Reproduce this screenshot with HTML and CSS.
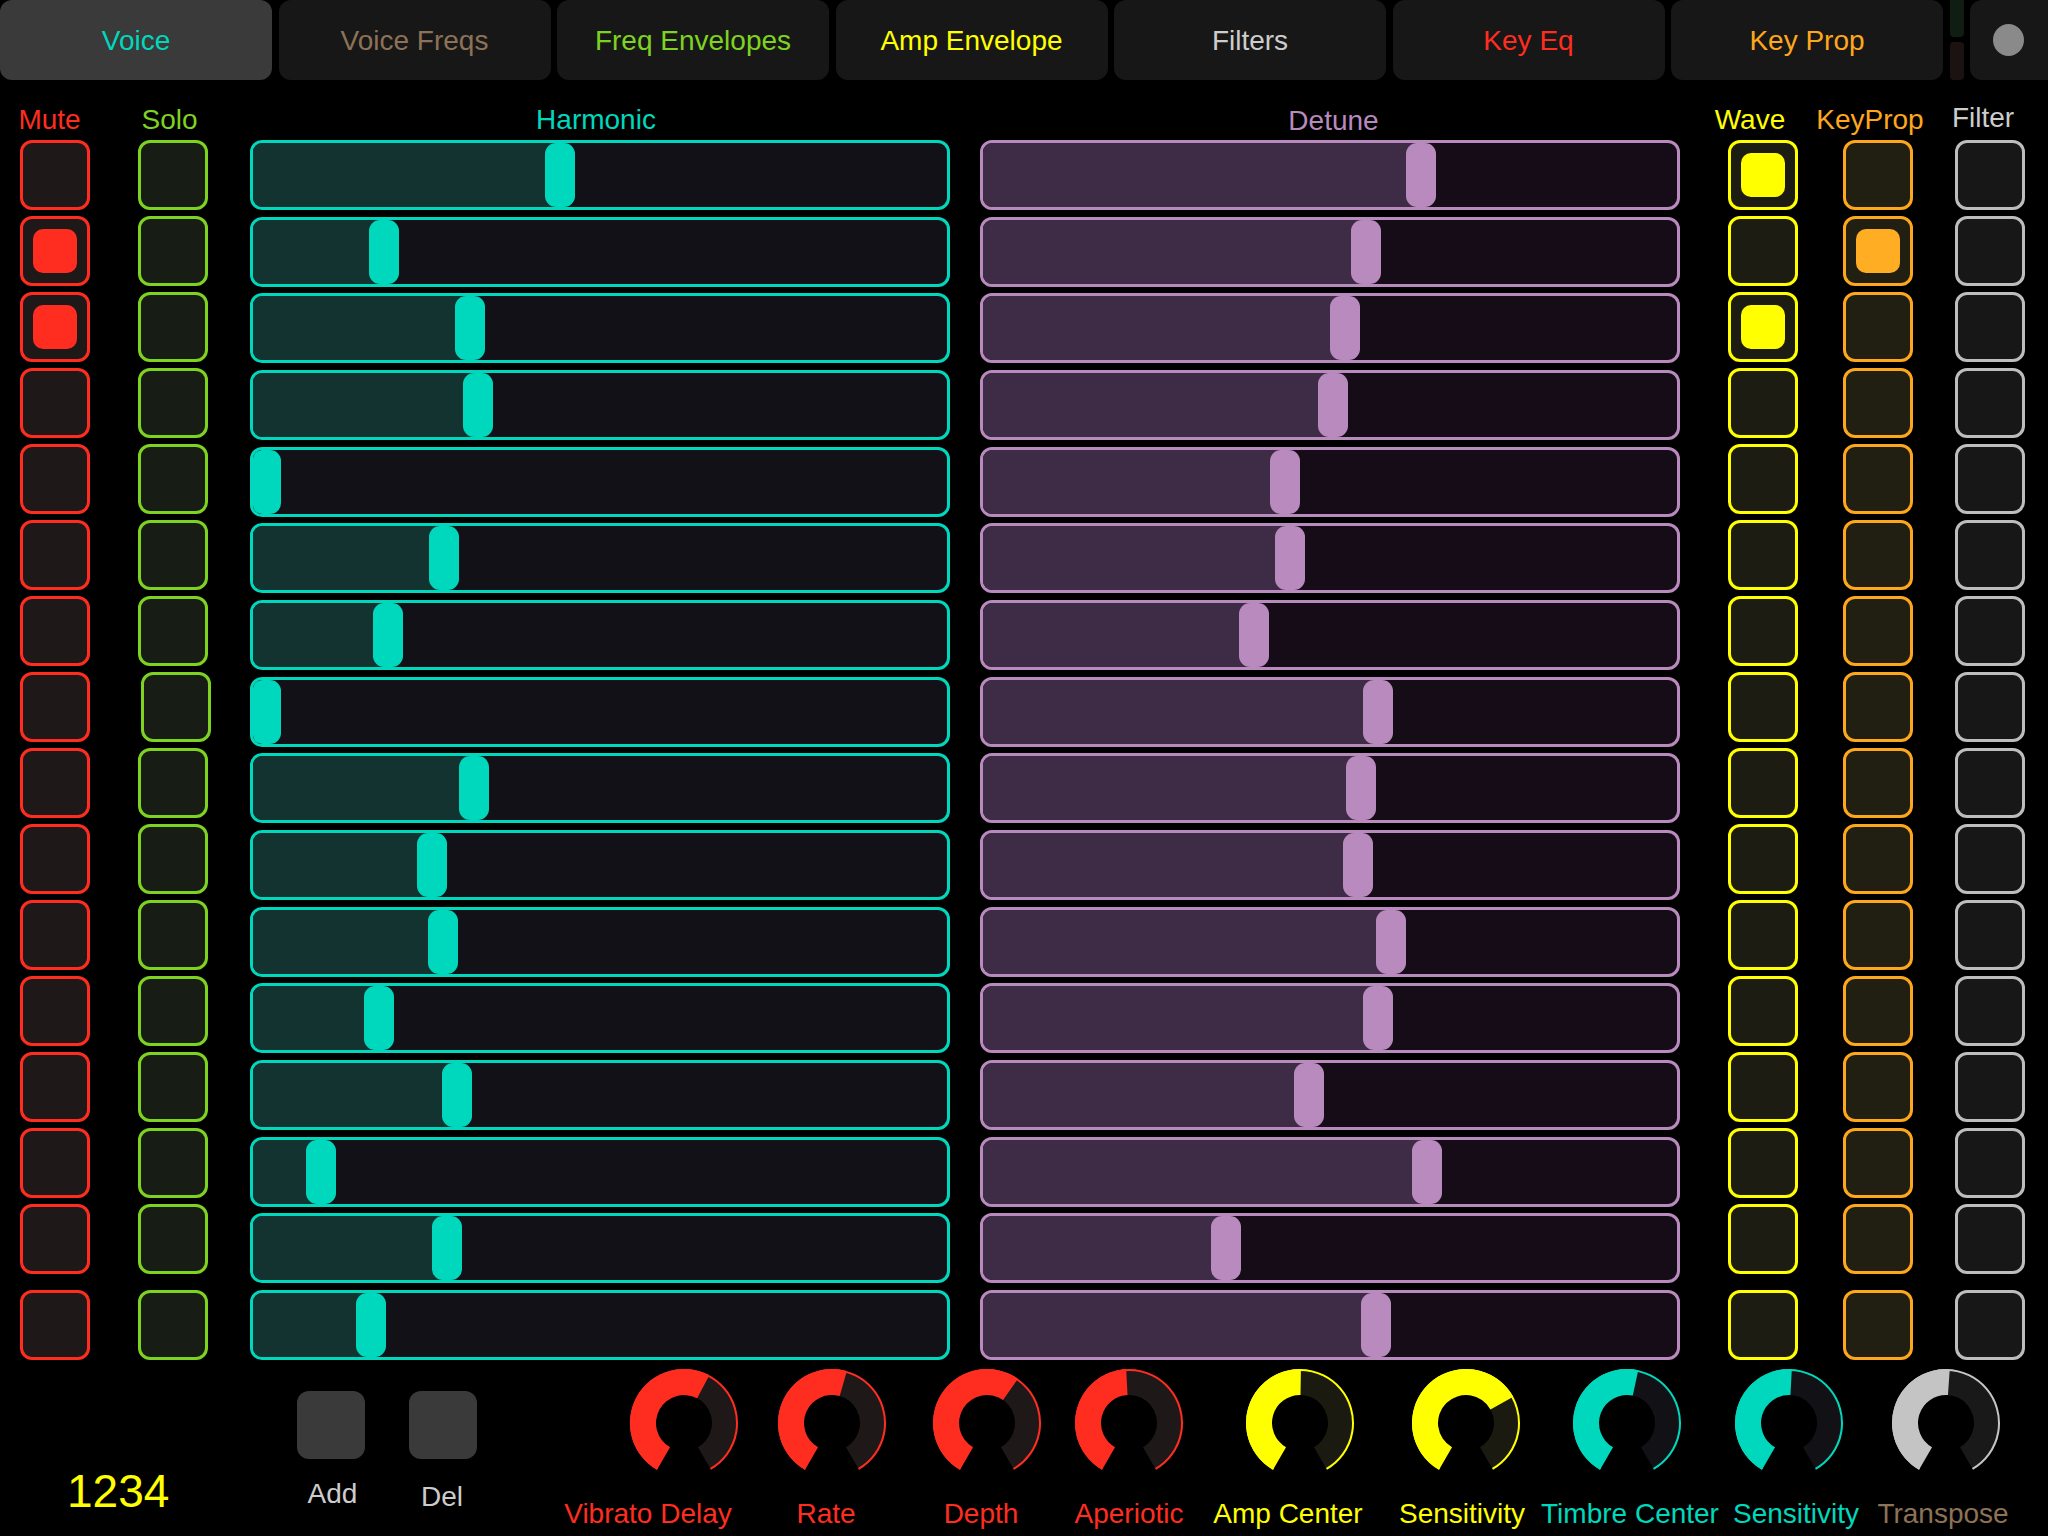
FILE: index.html
```html
<!DOCTYPE html>
<html>
<head>
<meta charset="utf-8">
<link rel="stylesheet" href="styles.css">
</head>
<body>
<div class="tabs">
  <div class="tab tab-active c-teal">Voice</div>
  <div class="tab c-brown">Voice Freqs</div>
  <div class="tab c-green">Freq Envelopes</div>
  <div class="tab c-yellow">Amp Envelope</div>
  <div class="tab c-light">Filters</div>
  <div class="tab c-red">Key Eq</div>
  <div class="tab c-orange">Key Prop</div>
  <div class="meter"><div class="meter-top"></div><div class="meter-bot"></div></div>
  <div class="roundbtn"><div class="dot"></div></div>
</div>

<div class="board">
  <div class="col col-mute">
    <div class="head"><span class="lbl c-red sh-mute">Mute</span></div>
    <div class="stack">
      <div class="tog tog-red"></div><div class="tog tog-red on"></div><div class="tog tog-red on"></div><div class="tog tog-red"></div>
      <div class="tog tog-red"></div><div class="tog tog-red"></div><div class="tog tog-red"></div><div class="tog tog-red"></div>
      <div class="tog tog-red"></div><div class="tog tog-red"></div><div class="tog tog-red"></div><div class="tog tog-red"></div>
      <div class="tog tog-red"></div><div class="tog tog-red"></div><div class="tog tog-red"></div><div class="tog tog-red"></div>
    </div>
  </div>
  <div class="col col-solo">
    <div class="head"><span class="lbl c-green sh-solo">Solo</span></div>
    <div class="stack">
      <div class="tog tog-green"></div><div class="tog tog-green"></div><div class="tog tog-green"></div><div class="tog tog-green"></div>
      <div class="tog tog-green"></div><div class="tog tog-green"></div><div class="tog tog-green"></div><div class="tog tog-green tog-nudge"></div>
      <div class="tog tog-green"></div><div class="tog tog-green"></div><div class="tog tog-green"></div><div class="tog tog-green"></div>
      <div class="tog tog-green"></div><div class="tog tog-green"></div><div class="tog tog-green"></div><div class="tog tog-green"></div>
    </div>
  </div>
  <div class="col col-harm">
    <div class="head"><span class="lbl c-teal sh-harm">Harmonic</span></div>
    <div class="sliders">
      <div class="slider sl-teal"><div class="fill" style="width:307px"></div></div>
      <div class="slider sl-teal"><div class="fill" style="width:131px"></div></div>
      <div class="slider sl-teal"><div class="fill" style="width:217px"></div></div>
      <div class="slider sl-teal"><div class="fill" style="width:225px"></div></div>
      <div class="slider sl-teal"><div class="fill" style="width:13px"></div></div>
      <div class="slider sl-teal"><div class="fill" style="width:191px"></div></div>
      <div class="slider sl-teal"><div class="fill" style="width:135px"></div></div>
      <div class="slider sl-teal"><div class="fill" style="width:13px"></div></div>
      <div class="slider sl-teal"><div class="fill" style="width:221px"></div></div>
      <div class="slider sl-teal"><div class="fill" style="width:179px"></div></div>
      <div class="slider sl-teal"><div class="fill" style="width:190px"></div></div>
      <div class="slider sl-teal"><div class="fill" style="width:126px"></div></div>
      <div class="slider sl-teal"><div class="fill" style="width:204px"></div></div>
      <div class="slider sl-teal"><div class="fill" style="width:68px"></div></div>
      <div class="slider sl-teal"><div class="fill" style="width:194px"></div></div>
      <div class="slider sl-teal"><div class="fill" style="width:118px"></div></div>
    </div>
  </div>
  <div class="col col-det">
    <div class="head"><span class="lbl c-purple sh-det">Detune</span></div>
    <div class="sliders">
      <div class="slider sl-purple"><div class="fill" style="width:438px"></div></div>
      <div class="slider sl-purple"><div class="fill" style="width:383px"></div></div>
      <div class="slider sl-purple"><div class="fill" style="width:362px"></div></div>
      <div class="slider sl-purple"><div class="fill" style="width:350px"></div></div>
      <div class="slider sl-purple"><div class="fill" style="width:302px"></div></div>
      <div class="slider sl-purple"><div class="fill" style="width:307px"></div></div>
      <div class="slider sl-purple"><div class="fill" style="width:271px"></div></div>
      <div class="slider sl-purple"><div class="fill" style="width:395px"></div></div>
      <div class="slider sl-purple"><div class="fill" style="width:378px"></div></div>
      <div class="slider sl-purple"><div class="fill" style="width:375px"></div></div>
      <div class="slider sl-purple"><div class="fill" style="width:408px"></div></div>
      <div class="slider sl-purple"><div class="fill" style="width:395px"></div></div>
      <div class="slider sl-purple"><div class="fill" style="width:326px"></div></div>
      <div class="slider sl-purple"><div class="fill" style="width:444px"></div></div>
      <div class="slider sl-purple"><div class="fill" style="width:243px"></div></div>
      <div class="slider sl-purple"><div class="fill" style="width:393px"></div></div>
    </div>
  </div>
  <div class="col col-wave">
    <div class="head"><span class="lbl c-yellow sh-wave">Wave</span></div>
    <div class="stack">
      <div class="tog tog-yellow on"></div><div class="tog tog-yellow"></div><div class="tog tog-yellow on"></div><div class="tog tog-yellow"></div>
      <div class="tog tog-yellow"></div><div class="tog tog-yellow"></div><div class="tog tog-yellow"></div><div class="tog tog-yellow"></div>
      <div class="tog tog-yellow"></div><div class="tog tog-yellow"></div><div class="tog tog-yellow"></div><div class="tog tog-yellow"></div>
      <div class="tog tog-yellow"></div><div class="tog tog-yellow"></div><div class="tog tog-yellow"></div><div class="tog tog-yellow"></div>
    </div>
  </div>
  <div class="col col-kp">
    <div class="head"><span class="lbl c-orange sh-kp">KeyProp</span></div>
    <div class="stack">
      <div class="tog tog-orange"></div><div class="tog tog-orange on"></div><div class="tog tog-orange"></div><div class="tog tog-orange"></div>
      <div class="tog tog-orange"></div><div class="tog tog-orange"></div><div class="tog tog-orange"></div><div class="tog tog-orange"></div>
      <div class="tog tog-orange"></div><div class="tog tog-orange"></div><div class="tog tog-orange"></div><div class="tog tog-orange"></div>
      <div class="tog tog-orange"></div><div class="tog tog-orange"></div><div class="tog tog-orange"></div><div class="tog tog-orange"></div>
    </div>
  </div>
  <div class="col col-filt">
    <div class="head"><span class="lbl c-light sh-filt">Filter</span></div>
    <div class="stack">
      <div class="tog tog-grey"></div><div class="tog tog-grey"></div><div class="tog tog-grey"></div><div class="tog tog-grey"></div>
      <div class="tog tog-grey"></div><div class="tog tog-grey"></div><div class="tog tog-grey"></div><div class="tog tog-grey"></div>
      <div class="tog tog-grey"></div><div class="tog tog-grey"></div><div class="tog tog-grey"></div><div class="tog tog-grey"></div>
      <div class="tog tog-grey"></div><div class="tog tog-grey"></div><div class="tog tog-grey"></div><div class="tog tog-grey"></div>
    </div>
  </div>
</div>

<div class="bottom">
  <div class="count">1234</div>
  <div class="pad"><div class="pad-btn"></div><div class="pad-lbl">Add</div></div>
  <div class="pad pad-del"><div class="pad-btn"></div><div class="pad-lbl">Del</div></div>

  <div class="knob k-red kn-1">
    <svg viewBox="0 0 110 110" width="110" height="110">
      <path class="k-track" d="M28,101.77A54,54 0 1 1 82,101.77L69,79.25A28,28 0 1 0 41,79.25Z"/>
      <path class="k-edge" d="M28.5,100.9A53,53 0 1 1 81.5,100.9"/>
      <path class="k-val" d="M28,101.77A54,54 0 0 1 80.35,7.32L68.15,30.28A28,28 0 0 0 41,79.25Z"/>
    </svg>
    <div class="k-lbl kl-1">Vibrato Delay</div>
  </div>
  <div class="knob k-red kn-2">
    <svg viewBox="0 0 110 110" width="110" height="110">
      <path class="k-track" d="M28,101.77A54,54 0 1 1 82,101.77L69,79.25A28,28 0 1 0 41,79.25Z"/>
      <path class="k-edge" d="M28.5,100.9A53,53 0 1 1 81.5,100.9"/>
      <path class="k-val" d="M28,101.77A54,54 0 0 1 69.88,3.09L62.72,28.08A28,28 0 0 0 41,79.25Z"/>
    </svg>
    <div class="k-lbl kl-2">Rate</div>
  </div>
  <div class="knob k-red kn-3">
    <svg viewBox="0 0 110 110" width="110" height="110">
      <path class="k-track" d="M28,101.77A54,54 0 1 1 82,101.77L69,79.25A28,28 0 1 0 41,79.25Z"/>
      <path class="k-edge" d="M28.5,100.9A53,53 0 1 1 81.5,100.9"/>
      <path class="k-val" d="M28,101.77A54,54 0 1 1 85.97,10.76L71.06,32.06A28,28 0 1 0 41,79.25Z"/>
    </svg>
    <div class="k-lbl kl-3">Depth</div>
  </div>
  <div class="knob k-red kn-4">
    <svg viewBox="0 0 110 110" width="110" height="110">
      <path class="k-track" d="M28,101.77A54,54 0 1 1 82,101.77L69,79.25A28,28 0 1 0 41,79.25Z"/>
      <path class="k-edge" d="M28.5,100.9A53,53 0 1 1 81.5,100.9"/>
      <path class="k-val" d="M28,101.77A54,54 0 0 1 52.17,1.08L53.54,27.04A28,28 0 0 0 41,79.25Z"/>
    </svg>
    <div class="k-lbl kl-4">Aperiotic</div>
  </div>
  <div class="knob k-yellow kn-5">
    <svg viewBox="0 0 110 110" width="110" height="110">
      <path class="k-track" d="M28,101.77A54,54 0 1 1 82,101.77L69,79.25A28,28 0 1 0 41,79.25Z"/>
      <path class="k-edge" d="M28.5,100.9A53,53 0 1 1 81.5,100.9"/>
      <path class="k-val" d="M28,101.77A54,54 0 0 1 55.94,1.01L55.49,27A28,28 0 0 0 41,79.25Z"/>
    </svg>
    <div class="k-lbl kl-5">Amp Center</div>
  </div>
  <div class="knob k-yellow kn-6">
    <svg viewBox="0 0 110 110" width="110" height="110">
      <path class="k-track" d="M28,101.77A54,54 0 1 1 82,101.77L69,79.25A28,28 0 1 0 41,79.25Z"/>
      <path class="k-edge" d="M28.5,100.9A53,53 0 1 1 81.5,100.9"/>
      <path class="k-val" d="M28,101.77A54,54 0 1 1 102.23,28.82L79.49,41.43A28,28 0 1 0 41,79.25Z"/>
    </svg>
    <div class="k-lbl kl-6">Sensitivity</div>
  </div>
  <div class="knob k-teal kn-7">
    <svg viewBox="0 0 110 110" width="110" height="110">
      <path class="k-track" d="M28,101.77A54,54 0 1 1 82,101.77L69,79.25A28,28 0 1 0 41,79.25Z"/>
      <path class="k-edge" d="M28.5,100.9A53,53 0 1 1 81.5,100.9"/>
      <path class="k-val" d="M28,101.77A54,54 0 0 1 66.23,2.18L60.82,27.61A28,28 0 0 0 41,79.25Z"/>
    </svg>
    <div class="k-lbl kl-7">Timbre Center</div>
  </div>
  <div class="knob k-teal kn-8">
    <svg viewBox="0 0 110 110" width="110" height="110">
      <path class="k-track" d="M28,101.77A54,54 0 1 1 82,101.77L69,79.25A28,28 0 1 0 41,79.25Z"/>
      <path class="k-edge" d="M28.5,100.9A53,53 0 1 1 81.5,100.9"/>
      <path class="k-val" d="M28,101.77A54,54 0 0 1 57.83,1.08L56.46,27.04A28,28 0 0 0 41,79.25Z"/>
    </svg>
    <div class="k-lbl kl-8">Sensitivity</div>
  </div>
  <div class="knob k-grey kn-9">
    <svg viewBox="0 0 110 110" width="110" height="110">
      <path class="k-track" d="M28,101.77A54,54 0 1 1 82,101.77L69,79.25A28,28 0 1 0 41,79.25Z"/>
      <path class="k-edge" d="M28.5,100.9A53,53 0 1 1 81.5,100.9"/>
      <path class="k-val" d="M28,101.77A54,54 0 0 1 58.77,1.13L56.95,27.07A28,28 0 0 0 41,79.25Z"/>
    </svg>
    <div class="k-lbl kl-9">Transpose</div>
  </div>
</div>
</body>
</html>
```

FILE: styles.css
```css
* { box-sizing: border-box; }

body {
  margin: 0;
  width: 2048px;
  height: 1536px;
  overflow: hidden;
  background: #000;
  font-family: "Liberation Sans", Arial, sans-serif;
  font-size: 28px;
}

/* colours */
.c-teal { color: #00d8bd; }
.c-brown { color: #8c7256; }
.c-green { color: #7ed321; }
.c-yellow { color: #ffff00; }
.c-light { color: #cdcdcd; }
.c-red { color: #ff2d20; }
.c-orange { color: #ffa71c; }
.c-purple { color: #b98abd; }

/* tab bar */
.tabs {
  display: flex;
  height: 80px;
  gap: 6.5px;
}
.tab {
  flex: 0 0 272px;
  height: 80px;
  border-radius: 12px;
  background: #171717;
  display: flex;
  align-items: center;
  justify-content: center;
  padding-top: 2px;
  font-size: 28px;
  white-space: nowrap;
}
.tab-active { background: #3a3a3a; }

.meter {
  flex: 0 0 14px;
  display: flex;
  flex-direction: column;
  justify-content: space-between;
}
.meter-top {
  height: 37px;
  background: #0f1d12;
  border-radius: 0 0 4px 4px;
}
.meter-bot {
  height: 38px;
  background: #1b1212;
  border-radius: 4px;
}
.roundbtn {
  flex: 1 1 auto;
  height: 80px;
  background: #171717;
  border-radius: 12px 0 0 12px;
  display: flex;
  align-items: center;
  justify-content: center;
}
.dot {
  width: 31px;
  height: 32px;
  border-radius: 50%;
  background: #8a8a8a;
  margin-right: 2px;
}

/* main board */
.board {
  display: flex;
  padding-top: 24px;
  height: 1280px;
}
.col { display: flex; flex-direction: column; }
.col-mute { margin-left: 20px; width: 70px; }
.col-solo { margin-left: 48px; width: 70px; }
.col-harm { margin-left: 42px; width: 700px; }
.col-det { margin-left: 30px; width: 700px; }
.col-wave { margin-left: 48px; width: 70px; }
.col-kp { margin-left: 45px; width: 70px; }
.col-filt { margin-left: 42px; width: 71px; }

.head {
  height: 36px;
  display: flex;
  justify-content: center;
  align-items: flex-start;
}
.lbl {
  line-height: 32px;
  white-space: nowrap;
  font-size: 28px;
}
.sh-mute { margin-right: 11px; }
.sh-solo { margin-right: 7px; }
.sh-harm { margin-right: 8px; }
.sh-det { margin-left: 7px; margin-top: 1px; }
.sh-wave { margin-right: 26px; }
.sh-kp { margin-right: 16px; }
.sh-filt { margin-right: 15px; margin-top: -2px; }

/* toggles */
.stack {
  height: 1220px;
  display: flex;
  flex-direction: column;
  gap: 6px;
}
.stack .tog:last-child { margin-top: auto; }
.tog {
  width: 70px;
  height: 70px;
  flex: 0 0 70px;
  border: 3px solid;
  border-radius: 12px;
  display: flex;
  align-items: center;
  justify-content: center;
}
.tog-nudge { margin-left: 3px; }
.tog.on::after {
  content: "";
  width: 44px;
  height: 44px;
  border-radius: 10px;
}
.tog-red { border-color: #ff2d20; background: #1f1818; }
.tog-red.on::after { background: #ff2d20; }
.tog-green { border-color: #7ed321; background: #171d15; }
.tog-yellow { border-color: #ffff00; background: #1c1c12; }
.tog-yellow.on::after { background: #ffff00; }
.tog-orange { border-color: #ffa71c; background: #201f12; }
.tog-orange.on::after { background: #ffad22; }
.tog-grey { border-color: #bdbdbd; background: #171717; }

/* sliders */
.sliders {
  height: 1220px;
  display: flex;
  flex-direction: column;
  justify-content: space-between;
}
.slider {
  height: 70px;
  flex: 0 0 70px;
  border: 3px solid;
  border-radius: 12px;
  display: flex;
  overflow: hidden;
}
.fill {
  position: relative;
  height: 100%;
}
.fill::after {
  content: "";
  position: absolute;
  top: 0;
  right: -15px;
  width: 30px;
  height: 100%;
  border-radius: 11px;
}
.sl-teal { border-color: #00d8bd; background: #111117; }
.sl-teal .fill { background: #12332f; }
.sl-teal .fill::after { background: #00d8bd; }
.sl-purple { border-color: #b98abd; background: #150c18; }
.sl-purple .fill { background: #3e2b45; }
.sl-purple .fill::after { background: #b98abd; }

/* bottom area */
.bottom {
  display: flex;
  align-items: flex-start;
  height: 176px;
}
.count {
  width: 297px;
  padding-left: 67px;
  padding-top: 108px;
  font-size: 46px;
  line-height: 46px;
  color: #ffff00;
}
.pad {
  width: 68px;
  display: flex;
  flex-direction: column;
  align-items: center;
  padding-top: 31px;
}
.pad-del { margin-left: 44px; }
.pad-btn {
  width: 68px;
  height: 68px;
  border-radius: 12px;
  background: #3a3a3a;
}
.pad-lbl {
  margin-top: 19px;
  margin-left: 3px;
  line-height: 32px;
  color: #cccccc;
}
.pad-del .pad-lbl { margin-top: 22px; margin-left: 0; margin-right: 2px; }

.knob {
  width: 110px;
  display: flex;
  flex-direction: column;
  align-items: center;
  padding-top: 8px;
}
.knob svg { display: block; }
.kn-1 { margin-left: 152px; }
.kn-2 { margin-left: 38px; }
.kn-3 { margin-left: 45px; }
.kn-4 { margin-left: 32px; }
.kn-5 { margin-left: 61px; }
.kn-6 { margin-left: 56px; }
.kn-7 { margin-left: 51px; }
.kn-8 { margin-left: 52px; }
.kn-9 { margin-left: 47px; }

.k-lbl {
  margin-top: 20px;
  line-height: 32px;
  white-space: nowrap;
}
.kl-1 { margin-right: 72px; }
.kl-2 { margin-right: 12px; }
.kl-3 { margin-right: 12px; }
.kl-5 { margin-right: 24px; }
.kl-6 { margin-right: 8px; }
.kl-7 { margin-left: 6px; }
.kl-8 { margin-left: 14px; }
.kl-9 { margin-right: 6px; }

.k-edge { fill: none; stroke-width: 2; }

.k-red .k-track { fill: #1f1818; }
.k-red .k-edge { stroke: #ff2d20; }
.k-red .k-val { fill: #ff2d20; }
.k-red .k-lbl { color: #ff2d20; }

.k-yellow .k-track { fill: #1a1a10; }
.k-yellow .k-edge { stroke: #ffff00; }
.k-yellow .k-val { fill: #ffff00; }
.k-yellow .k-lbl { color: #ffff00; }

.k-teal .k-track { fill: #111116; }
.k-teal .k-edge { stroke: #00d8bd; }
.k-teal .k-val { fill: #00d8bd; }
.k-teal .k-lbl { color: #00d8bd; }

.k-grey .k-track { fill: #191919; }
.k-grey .k-edge { stroke: #c4c4c4; }
.k-grey .k-val { fill: #c4c4c4; }
.k-grey .k-lbl { color: #8c7256; }
```
